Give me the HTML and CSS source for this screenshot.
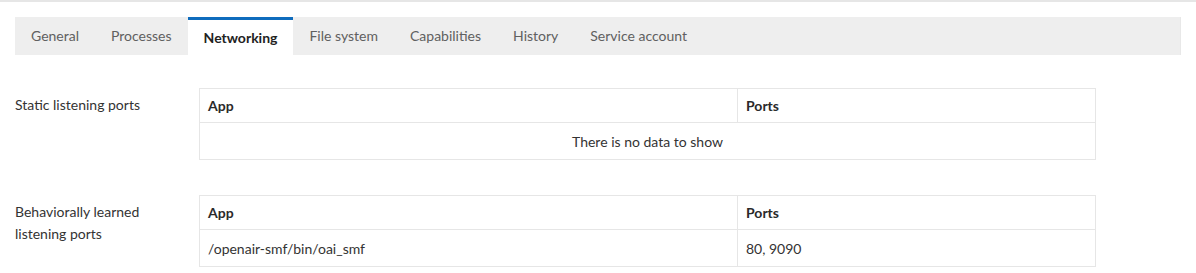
FILE: index.html
```html
<!DOCTYPE html>
<html>
<head>
<meta charset="utf-8">
<link rel="stylesheet" href="styles.css">
</head>
<body>
<div class="page">
  <nav class="tabs">
    <div class="tab">General</div>
    <div class="tab">Processes</div>
    <div class="tab active">Networking</div>
    <div class="tab">File system</div>
    <div class="tab">Capabilities</div>
    <div class="tab">History</div>
    <div class="tab">Service account</div>
  </nav>
  <section class="section first">
    <div class="label">Static listening ports</div>
    <table class="grid">
      <thead><tr><th class="c-app">App</th><th>Ports</th></tr></thead>
      <tbody><tr><td colspan="2" class="empty">There is no data to show</td></tr></tbody>
    </table>
  </section>
  <section class="section second">
    <div class="label">Behaviorally learned<br>listening ports</div>
    <table class="grid">
      <thead><tr><th class="c-app">App</th><th>Ports</th></tr></thead>
      <tbody><tr><td>/openair-smf/bin/oai_smf</td><td>80, 9090</td></tr></tbody>
    </table>
  </section>
</div>
</body>
</html>
```
FILE: styles.css
```css
html, body {
  margin: 0;
  padding: 0;
  background: #fff;
}
body {
  font-family: Lato, "Open Sans", sans-serif;
  color: #333;
  border-top: 2px solid #e6e6e6;
}
.page {
  padding: 15px 15px 0 15px;
}
.tabs {
  display: flex;
  background: #eeeeee;
  height: 38px;
  width: 1166px;
  box-sizing: border-box;
  border-right: 1px solid #e8e8e8;
}
.tab {
  padding: 0 16px;
  font-size: 14px;
  line-height: 38px;
  color: #606060;
  box-sizing: border-box;
  height: 38px;
}
.tab.active {
  background: #fff;
  color: #222;
  font-weight: 700;
  border-top: 3px solid #0f6cbd;
  line-height: 35px;
}
.section {
  display: flex;
  align-items: flex-start;
}
.section.first {
  margin-top: 33px;
}
.section.second {
  margin-top: 35px;
}
.label {
  width: 184px;
  flex: none;
  font-size: 14px;
  line-height: 22px;
  padding-top: 6px;
  color: #333;
}
.grid {
  width: 897px;
  border-collapse: collapse;
  font-size: 14px;
  color: #333;
}
.grid th, .grid td {
  border: 1px solid #e6e6e6;
  text-align: left;
  padding: 0 8px;
}
.grid th {
  font-weight: 700;
  height: 33px;
  color: #2a2a2a;
}
.grid td {
  height: 36px;
}
.grid .c-app {
  width: 538px;
  box-sizing: border-box;
}
.grid td.empty {
  text-align: center;
}
```
